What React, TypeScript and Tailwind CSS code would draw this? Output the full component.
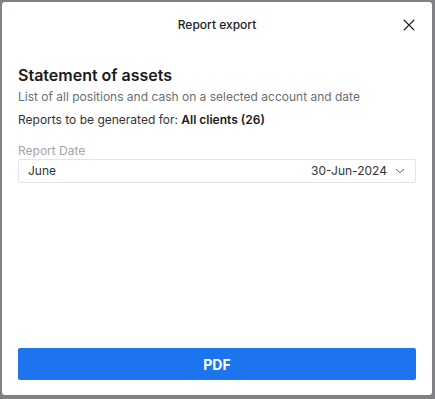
import React from 'react';
import { X, ChevronDown } from 'lucide-react';

const App: React.FC = () => {
  return (
    <div className="w-[435px] h-[399px] bg-[#7f8184] p-[2px] pr-[3px] pb-[4px] font-['Inter',sans-serif]">
      <div className="h-full bg-white rounded-[3px] flex flex-col">
        {/* Header */}
        <div className="relative h-[46px] flex items-center justify-center">
          <span className="text-[12px] font-medium text-[#222]">Report export</span>
          <button className="absolute right-[13px] top-[13px] text-[#222]">
            <X className="h-[20px] w-[20px]" strokeWidth={1.3} />
          </button>
        </div>

        <div className="px-[16px] pt-[17px] flex flex-col flex-1">
          <h2 className="text-[16px] font-semibold text-[#1a1a1a] leading-[20px]">Statement of assets</h2>
          <p className="text-[12px] text-[#6b6e73] mt-[3px] leading-[18px]">
            List of all positions and cash on a selected account and date
          </p>
          <p className="text-[12px] text-[#333] mt-[5px] leading-[18px]">
            Reports to be generated for: <span className="font-semibold text-[#1a1a1a]">All clients (26)</span>
          </p>

          {/* Report date */}
          <div className="mt-[14px]">
            <div className="text-[12px] text-[#a3a5a8] leading-[16px]">Report Date</div>
            <div className="h-[24px] border border-[#e3e4e6] rounded-[2px] flex items-center pl-[9px] pr-[8px] text-[12px] text-[#333]">
              <span className="flex-1">June</span>
              <span>30-Jun-2024</span>
              <ChevronDown className="ml-[6px] h-[14px] w-[14px] text-[#444]" strokeWidth={1.6} />
            </div>
          </div>

          <div className="flex-1" />

          <button className="mb-[15px] h-[32px] w-full rounded-[2px] bg-[#1d74ef] text-white text-[14px] font-bold">
            PDF
          </button>
        </div>
      </div>
    </div>
  );
};

export default App;
